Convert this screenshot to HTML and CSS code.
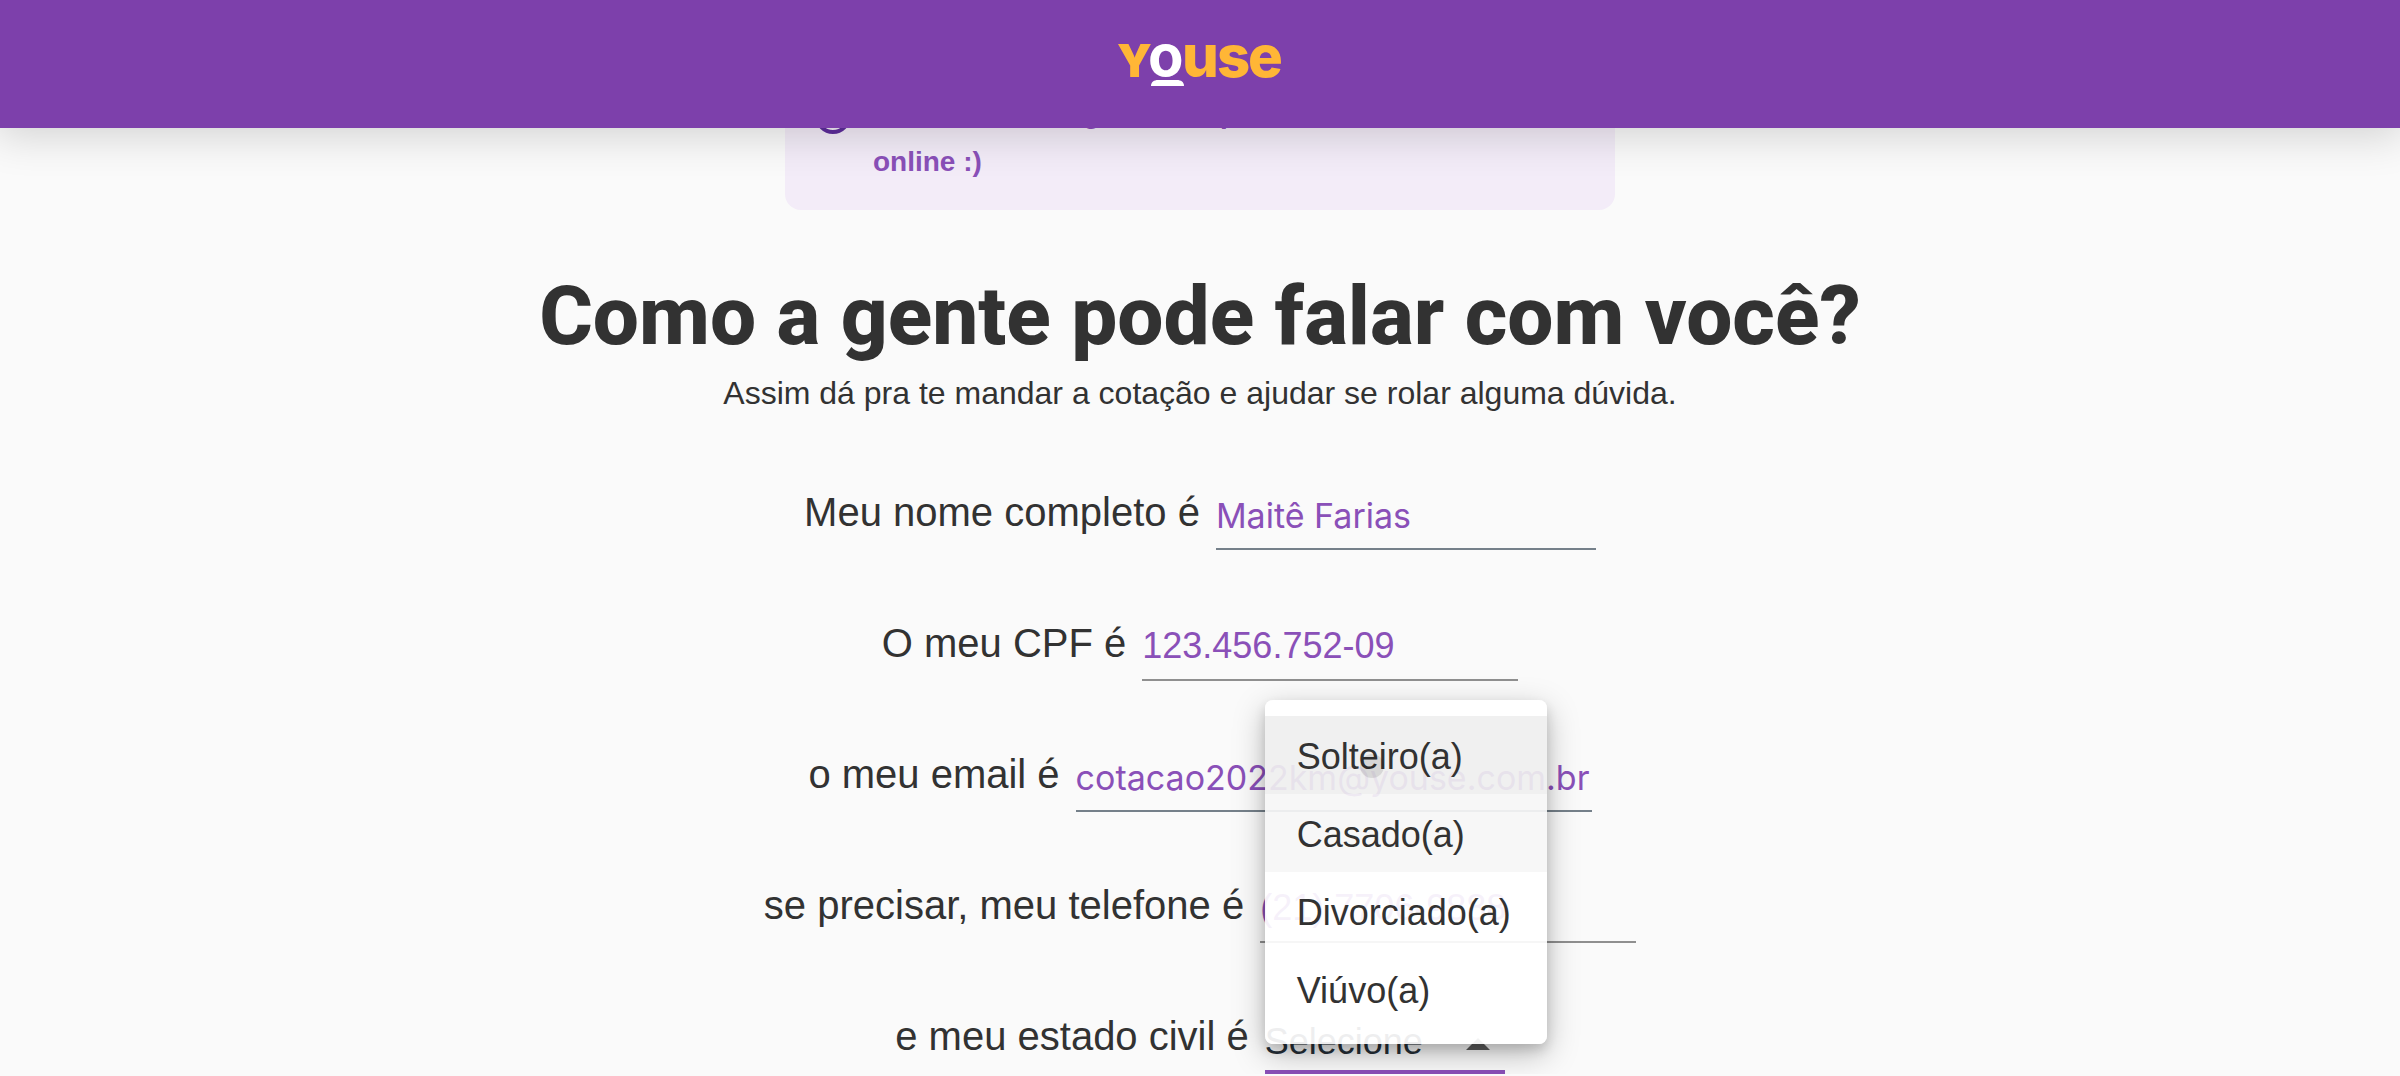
FILE: index.html
```html
<!DOCTYPE html>
<html lang="pt-BR">
<head>
<meta charset="utf-8">
<meta name="viewport" content="width=device-width, initial-scale=1">
<title>Youse</title>
<link rel="stylesheet" href="styles.css">
</head>
<body>
<header class="topbar">
  <a class="logo" href="#" aria-label="Youse">
    <svg width="172" height="80" viewBox="0 -20 172 80" aria-hidden="true">
      <g class="logo-letters">
        <text class="logo-y" x="3" y="41">Y</text>
        <text x="68" y="41">u</text>
        <text x="103" y="41">s</text>
        <text x="134" y="41">e</text>
        <text class="logo-o" x="34" y="40">o</text>
      </g>
      <path class="logo-base" d="M37 50c0-4 3-6 7-6h19c4 0 7 2 7 6z"/>
    </svg>
  </a>
</header>

<main class="page">
  <section class="notice">
    <svg class="notice-icon" width="36" height="36" viewBox="0 0 36 36" aria-hidden="true">
      <circle cx="18" cy="18" r="16"/>
      <path d="M18 16v10M18 9v3"/>
    </svg>
    <p class="notice-text">Contrate seu seguro auto pelo site de forma 100% online :)</p>
  </section>

  <h1 class="title">Como a gente pode falar com você?</h1>
  <p class="subtitle">Assim dá pra te mandar a cotação e ajudar se rolar alguma dúvida.</p>

  <form class="form">
    <div class="row">
      <label for="name">Meu nome completo é</label>
      <input class="field field-name" id="name" type="text" value="Maitê Farias">
    </div>
    <div class="row">
      <label for="cpf">O meu CPF é</label>
      <input class="field field-short" id="cpf" type="text" value="123.456.752-09">
    </div>
    <div class="row">
      <label for="email">o meu email é</label>
      <input class="field field-email" id="email" type="email" value="cotacao2022km@youse.com.br">
    </div>
    <div class="row">
      <label for="phone">se precisar, meu telefone é</label>
      <input class="field field-short" id="phone" type="tel" value="(21) 7706-9888">
    </div>
    <div class="row">
      <label for="status">e meu estado civil é</label>
      <div class="select">
        <select class="select-control" id="status">
          <option>Selecione</option>
          <option>Solteiro(a)</option>
          <option>Casado(a)</option>
          <option>Divorciado(a)</option>
          <option>Viúvo(a)</option>
        </select>
        <svg class="select-arrow" width="24" height="12" viewBox="0 0 24 12" aria-hidden="true"><path d="M0 12 12 0l12 12z"/></svg>
        <div class="menu">
          <button class="menu-item is-active" type="button">Solteiro(a)<span class="ripple"></span></button>
          <button class="menu-item is-hover" type="button">Casado(a)</button>
          <button class="menu-item" type="button">Divorciado(a)</button>
          <button class="menu-item" type="button">Viúvo(a)</button>
        </div>
      </div>
    </div>
  </form>
</main>
</body>
</html>
```
FILE: styles.css
```css
* { box-sizing: border-box; }

body {
  margin: 0;
  background: #fafafa;
  color: #323232;
  font-family: "Liberation Sans", Arial, sans-serif;
}

.topbar {
  position: fixed;
  top: 0;
  left: 0;
  right: 0;
  z-index: 2;
  display: flex;
  justify-content: center;
  height: 128px;
  padding-top: 16px;
  background: #7d40ab;
  box-shadow: 0 4px 40px 4px rgba(0, 0, 0, .16);
}

.logo { height: 80px; }
.logo svg { display: block; overflow: visible; }
.logo-letters {
  fill: #ffb636;
  font-family: Inter, sans-serif;
  font-size: 58px;
  font-weight: 800;
}
.logo-letters .logo-y {
  font-size: 45px;
  font-weight: 900;
}
.logo-letters .logo-o,
.logo-base { fill: #fff; }
.logo-letters .logo-o { font-weight: 700; }

.page {
  display: flex;
  flex-direction: column;
  align-items: center;
  padding-top: 66px;
}

.notice {
  display: flex;
  gap: 22px;
  width: 100%;
  max-width: 830px;
  padding: 24px 30px;
  border-radius: 16px;
  background: #f3ecf8;
}
.notice-icon {
  flex: none;
  margin-top: 8px;
  fill: none;
  stroke: #5e2d9c;
  stroke-width: 4;
}
.notice-text {
  margin: 0;
  color: #8a50b8;
  font-size: 28px;
  font-weight: 700;
  line-height: 48px;
}

.title {
  margin: 58px 0 0;
  font-family: Roboto, sans-serif;
  font-size: 82px;
  font-weight: 800;
  line-height: 96px;
  text-align: center;
}

.subtitle {
  margin: 9px 0 0;
  font-size: 32px;
  line-height: 40px;
  text-align: center;
}

.form { width: 100%; margin-top: 6px; }

.row {
  display: flex;
  justify-content: center;
  align-items: flex-end;
  gap: 16px;
  height: 131px;
}
.row label {
  padding-bottom: 14px;
  font-size: 40px;
  line-height: 48px;
}

.field {
  height: 64px;
  padding: 0 0 4px;
  border: 0;
  border-bottom: 2px solid #8f8f8f;
  background: none;
  color: #8a50b8;
  font: 36px/44px "Liberation Sans", Arial, sans-serif;
  outline: 0;
}
.field-name { width: 380px; }
.field-short { width: 376px; }
.field-email { width: 516px; }
.field-name,
.field-email {
  border-color: #75808a;
  font-family: Inter, sans-serif;
  font-size: 34px;
}

.select {
  position: relative;
  width: 240px;
}
.select-control {
  display: block;
  width: 100%;
  height: 64px;
  padding: 4px 0 0;
  appearance: none;
  border: 0;
  border-bottom: 4px solid #8a50b8;
  border-radius: 0;
  background: none;
  color: #263038;
  font: 36px/44px "Liberation Sans", Arial, sans-serif;
  outline: 0;
}
.select-arrow {
  position: absolute;
  right: 15px;
  bottom: 24px;
  fill: #5c5c5c;
}

.menu {
  position: absolute;
  left: 0;
  bottom: 30px;
  width: 282px;
  padding: 16px 0;
  border-radius: 8px;
  background: rgba(255, 255, 255, .92);
  box-shadow: 0 10px 32px rgba(0, 0, 0, .26), 0 6px 12px rgba(0, 0, 0, .14);
}
.menu-item {
  position: relative;
  display: block;
  width: 100%;
  height: 78px;
  padding: 4px 32px 0;
  border: 0;
  background: none;
  color: #323232;
  font: 36px/44px "Liberation Sans", Arial, sans-serif;
  text-align: left;
}
.menu-item.is-active { background: rgba(0, 0, 0, .06); }
.menu-item.is-hover { background: rgba(0, 0, 0, .03); }
.ripple {
  position: absolute;
  left: 95px;
  top: 38px;
  width: 24px;
  height: 24px;
  border-radius: 50%;
  background: rgba(0, 0, 0, .1);
}
```
